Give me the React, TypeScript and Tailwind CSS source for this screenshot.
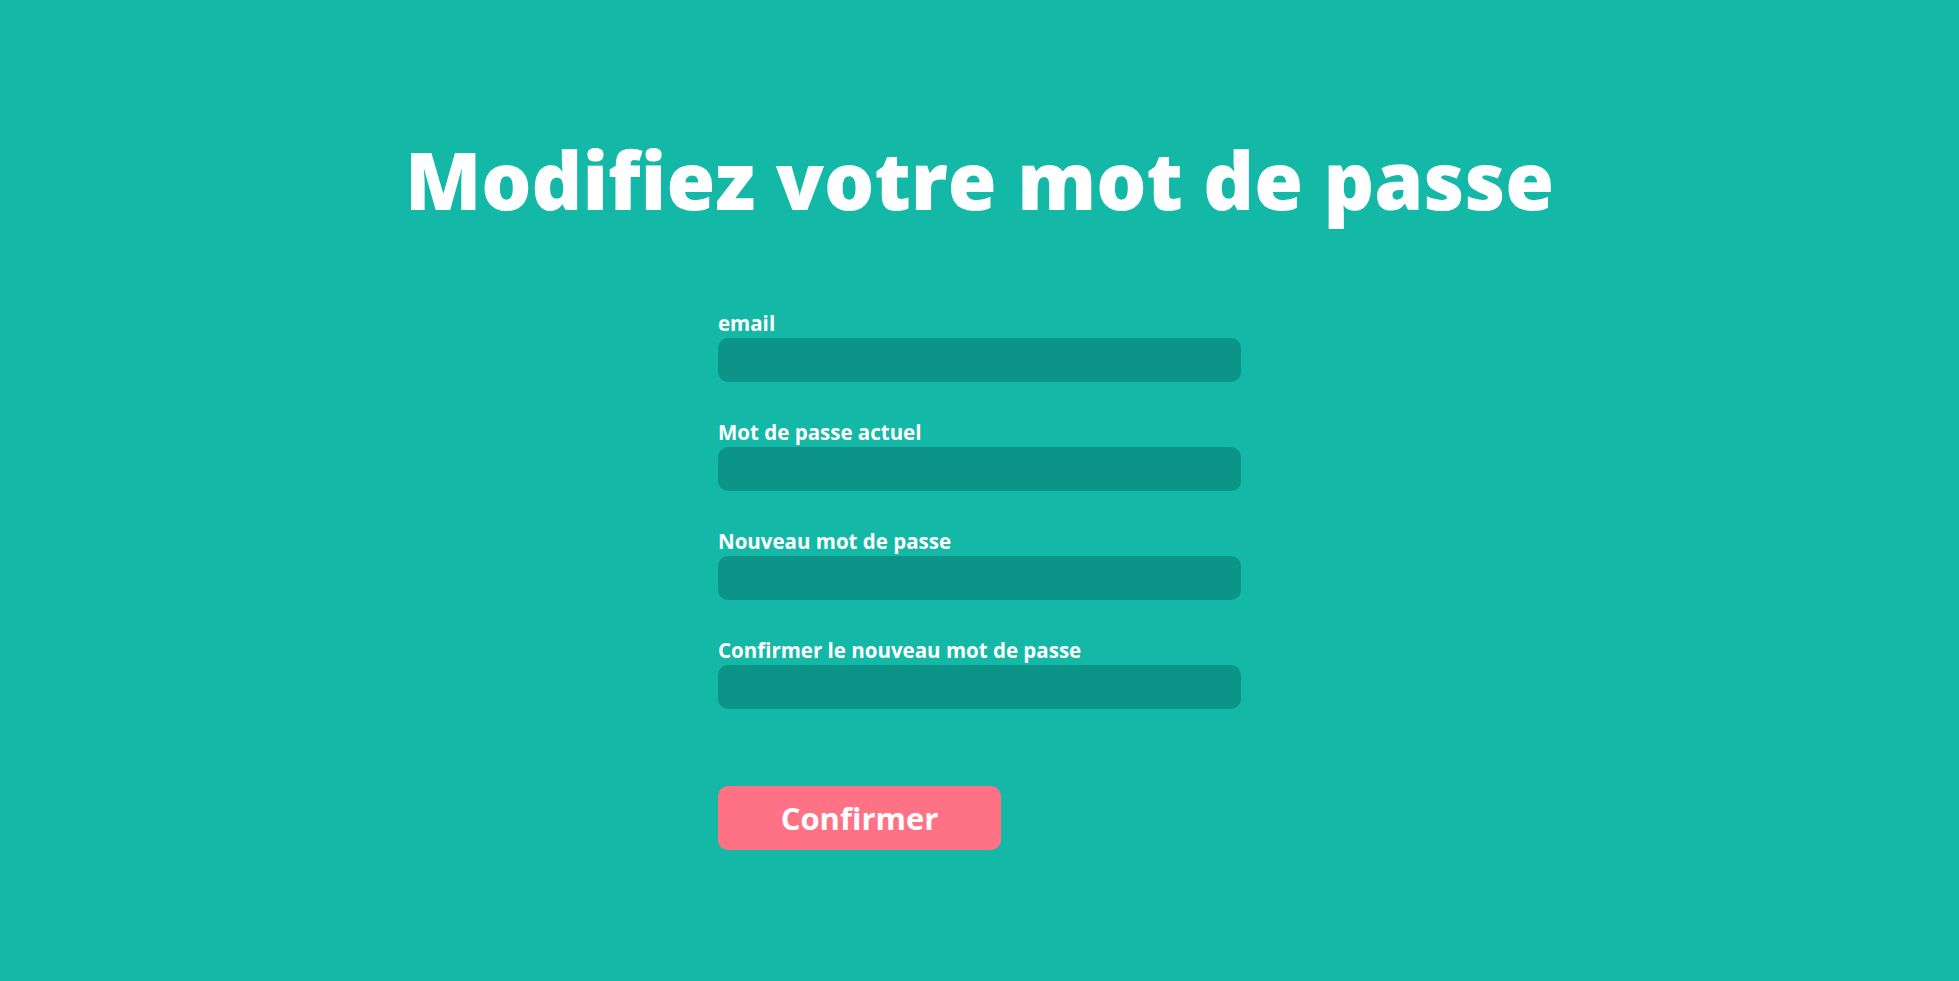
import { useState } from 'react';

// Champs du formulaire
const fields = [
  { id: 'email', label: 'email', type: 'email' },
  { id: 'current', label: 'Mot de passe actuel', type: 'password' },
  { id: 'next', label: 'Nouveau mot de passe', type: 'password' },
  { id: 'confirm', label: 'Confirmer le nouveau mot de passe', type: 'password' },
];

export default function App() {
  const [values, setValues] = useState<Record<string, string>>({});

  const handleChange = (id: string, value: string) => {
    setValues((prev) => ({ ...prev, [id]: value }));
  };

  return (
    <main
      className="min-h-screen bg-[#14b8a6] flex flex-col items-center text-white"
      style={{ fontFamily: '"Open Sans", "Noto Sans", sans-serif' }}
    >
      <h1 className="mt-[140px] text-[79px] leading-[80px] font-extrabold">
        Modifiez votre mot de passe
      </h1>

      <form className="w-[523px] mt-[91px] flex flex-col" onSubmit={(e) => e.preventDefault()}>
        <div className="flex flex-col gap-[38px]">
          {fields.map((field) => (
            <div key={field.id} className="flex flex-col">
              <label htmlFor={field.id} className="text-[20.5px] leading-[24px] font-bold">
                {field.label}
              </label>
              <input
                id={field.id}
                type={field.type}
                value={values[field.id] || ''}
                onChange={(e) => handleChange(field.id, e.target.value)}
                className="mt-[3px] h-[44px] w-full rounded-[10px] bg-[#0d9488] px-4 text-white outline-none"
              />
            </div>
          ))}
        </div>

        <button
          type="submit"
          className="mt-[77px] w-[283px] h-[64px] rounded-[10px] bg-[#ff7286] text-[31px] font-bold text-white"
        >
          Confirmer
        </button>
      </form>
    </main>
  );
}
